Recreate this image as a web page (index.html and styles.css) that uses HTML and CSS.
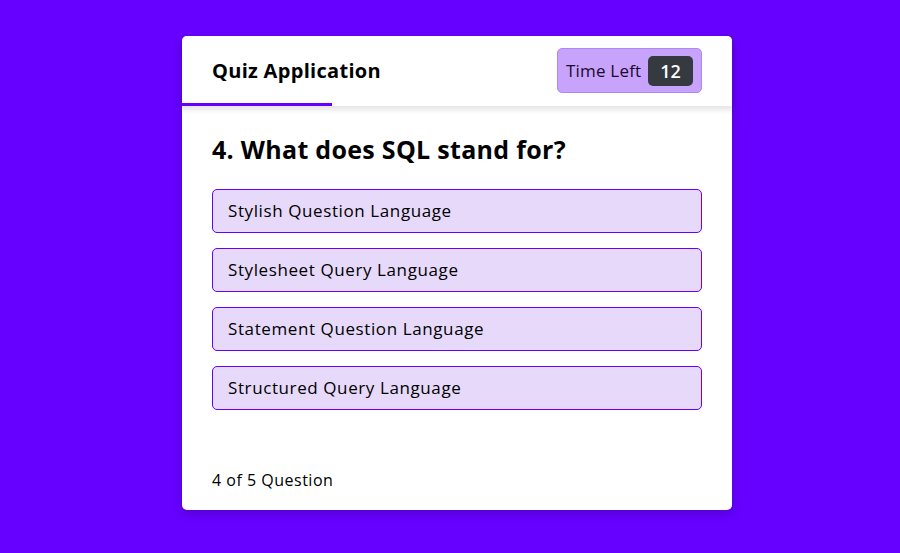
FILE: index.html
```html
<!DOCTYPE html>
<html>
<head>
<meta charset="utf-8">
<link rel="stylesheet" href="styles.css">
</head>
<body>
<div class="quiz-box">
  <header class="quiz-header">
    <div class="title">Quiz Application</div>
    <div class="timer">
      <span class="time-left-txt">Time Left</span>
      <span class="timer-sec">12</span>
    </div>
    <div class="time-line"></div>
  </header>
  <section class="quiz-body">
    <div class="que-text">4. What does SQL stand for?</div>
    <div class="option-list">
      <div class="option">Stylish Question Language</div>
      <div class="option">Stylesheet Query Language</div>
      <div class="option">Statement Question Language</div>
      <div class="option">Structured Query Language</div>
    </div>
  </section>
  <footer class="quiz-footer">
    <span class="total-que"><b>4</b> of <b>5</b> Question</span>
  </footer>
</div>
</body>
</html>
```
FILE: styles.css
```css
* { box-sizing: border-box; }
html, body { margin: 0; padding: 0; }
body {
  background: #6600ff;
  font-family: "Open Sans", "Liberation Sans", sans-serif;
  color: #000;
  height: 553px;
  overflow: hidden;
}
.quiz-box {
  width: 550px;
  margin: 36px 0 0 182px;
  background: #fff;
  border-radius: 5px;
  box-shadow: 0 4px 10px rgba(0,0,0,0.18);
}
.quiz-header {
  position: relative;
  height: 70px;
  padding: 0 30px;
  display: flex;
  align-items: center;
  justify-content: space-between;
  border-radius: 5px 5px 0 0;
  box-shadow: 0 3px 5px 1px rgba(0,0,0,0.1);
  background: #fff;
  z-index: 2;
}
.title { font-size: 20px; font-weight: 700; letter-spacing: 0.3px; margin-top: -1px; }
.timer {
  width: 145px;
  height: 45px;
  padding: 0 8px;
  margin-top: -1px;
  display: flex;
  align-items: center;
  justify-content: space-between;
  background: #c7a3fc;
  border: 1px solid #ad86fb;
  border-radius: 5px;
  color: #1a0a2e;
}
.time-left-txt { font-size: 17px; letter-spacing: 0.2px; }
.timer-sec {
  width: 45px;
  height: 30px;
  line-height: 30px;
  text-align: center;
  font-size: 18px;
  font-weight: 600;
  color: #fff;
  background: #343a40;
  border-radius: 5px;
}
.time-line {
  position: absolute;
  left: 0;
  bottom: 0;
  width: 150px;
  height: 3px;
  background: #6600ff;
}
.quiz-body { padding: 25px 30px 20px; }
.que-text { font-size: 25px; font-weight: 700; line-height: 37px; letter-spacing: 0.3px; }
.option-list { padding: 21px 0 5px; }
.option {
  background: #e7d9fa;
  border: 1px solid #6600ff;
  border-radius: 5px;
  padding: 8px 15px;
  font-size: 17px;
  line-height: 26px;
  letter-spacing: 0.6px;
  margin-bottom: 15px;
}
.quiz-footer {
  height: 60px;
  padding: 0 30px;
  display: flex;
  align-items: center;
  font-size: 16px;
  letter-spacing: 0.5px;
}
.total-que b { font-weight: 500; }
```
